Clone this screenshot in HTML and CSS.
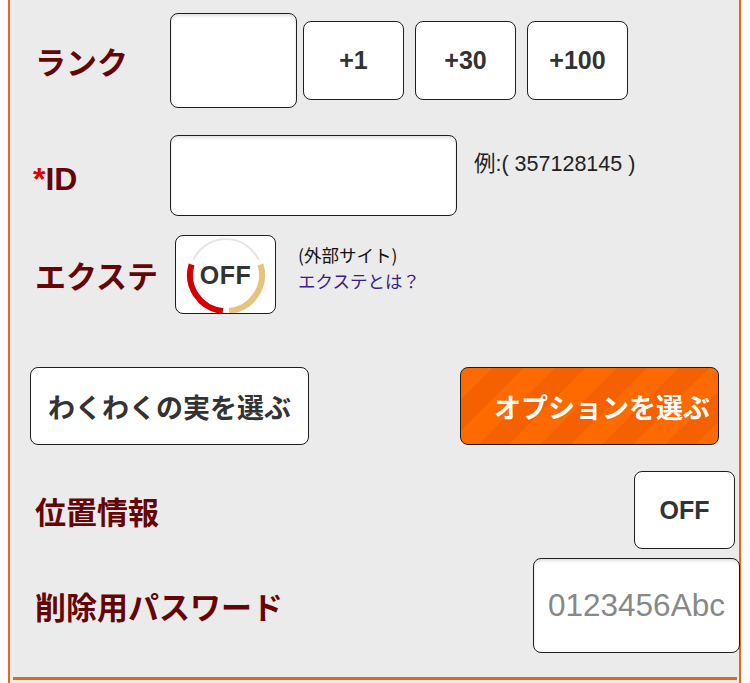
FILE: index.html
```html
<!DOCTYPE html>
<html lang="ja">
<head>
<meta charset="utf-8">
<title>フォーム</title>
<link rel="stylesheet" href="styles.css">
</head>
<body>
<div class="panel">
  <div class="row row-rank">
    <div class="label">ランク</div>
    <div class="field field-rank"></div>
    <div class="btn-group">
      <button class="btn btn-num">+1</button>
      <button class="btn btn-num">+30</button>
      <button class="btn btn-num">+100</button>
    </div>
  </div>

  <div class="row row-id">
    <div class="label label-id"><span class="req">*</span>ID</div>
    <div class="field field-id"></div>
    <div class="note">例:( 357128145 )</div>
  </div>

  <div class="row row-ext">
    <div class="label label-ext">エクステ</div>
    <div class="ring-box">
      <svg class="ring" viewBox="0 0 101 79" width="101" height="79" aria-hidden="true">
        <path d="M18.4 24.8 A36 36 0 0 1 83.6 24.8" fill="none" stroke="#e6e6e6" stroke-width="2"/>
        <path d="M16.6 29.5 A36 36 0 0 0 47.9 75.9" fill="none" stroke="#d40000" stroke-width="6"/>
        <path d="M54.1 75.9 A36 36 0 0 0 85.4 29.5" fill="none" stroke="#e8c37d" stroke-width="6"/>
      </svg>
      <span class="ring-text">OFF</span>
    </div>
    <div class="ext-info">
      <div class="ext-note">(外部サイト)</div>
      <a class="ext-link" href="#">エクステとは？</a>
    </div>
  </div>

  <div class="row row-choose">
    <button class="btn btn-wide btn-white">わくわくの実を選ぶ</button>
    <button class="btn btn-wide btn-orange">オプションを選ぶ</button>
  </div>

  <div class="row row-loc">
    <div class="label">位置情報</div>
    <button class="btn btn-num btn-off">OFF</button>
  </div>

  <div class="row row-pass">
    <div class="label">削除用パスワード</div>
    <div class="field field-pass"><span class="placeholder">0123456Abc</span></div>
  </div>

  <div class="divider"></div>
</div>
</body>
</html>
```

FILE: styles.css
```css
html, body {
  margin: 0;
  padding: 0;
  background: #fbfbfb;
}

body {
  font-family: "Liberation Sans", "Noto Sans CJK JP", sans-serif;
  overflow: hidden;
}

.panel {
  margin-left: 8px;
  width: 729px;
  min-height: 683px;
  padding-top: 13px;
  background: #ebebeb;
  border-left: 2px solid #e2661f;
  border-right: 2px solid #e2661f;
  box-sizing: content-box;
}

.row {
  display: flex;
  align-items: center;
}

.label {
  font-family: "Noto Sans CJK JP", sans-serif;
  font-weight: 700;
  font-size: 31px;
  color: #650606;
  white-space: nowrap;
  flex-shrink: 0;
}

.field {
  background: #fff;
  border: 1.5px solid #1e1e1e;
  border-radius: 8px;
  box-sizing: border-box;
  box-shadow: inset 0 2px 3px rgba(0, 0, 0, 0.12);
}

.btn {
  font: inherit;
  margin: 0;
  padding: 0;
  background: #fff;
  border: 1.5px solid #1e1e1e;
  border-radius: 8px;
  box-sizing: border-box;
  color: #333;
  cursor: pointer;
}

/* rank */
.row-rank {
  height: 95px;
  padding-left: 25px;
}
.row-rank .label {
  width: 135px;
}
.field-rank {
  width: 127px;
  height: 95px;
}
.btn-group {
  display: flex;
  gap: 11px;
  margin-left: 6px;
}
.btn-num {
  width: 101px;
  height: 79px;
  font-family: "Liberation Sans", sans-serif;
  font-weight: 700;
  font-size: 25px;
  color: #333;
}

/* id */
.row-id {
  height: 81px;
  margin-top: 27px;
  padding-left: 23px;
  align-items: flex-start;
}
.label-id {
  width: 137px;
  font-family: "Liberation Sans", sans-serif;
  font-size: 32px;
  margin-top: 26px;
}
.req {
  color: #e00000;
}
.field-id {
  width: 287px;
  height: 81px;
}
.note {
  margin-left: 17px;
  margin-top: 11px;
  font-size: 21.5px;
  color: #222;
  white-space: nowrap;
}

/* extension */
.row-ext {
  height: 79px;
  margin-top: 19px;
  padding-left: 25px;
}
.label-ext {
  width: 140px;
}
.ring-box {
  position: relative;
  width: 101px;
  height: 79px;
  background: #fff;
  border: 1.5px solid #1e1e1e;
  border-radius: 8px;
  box-sizing: border-box;
  display: flex;
  align-items: center;
  justify-content: center;
  overflow: hidden;
}
.ring {
  position: absolute;
  left: -1.5px;
  top: -1.5px;
}
.ring-text {
  position: relative;
  font-weight: 700;
  font-size: 25px;
  color: #333;
  letter-spacing: 0.5px;
  margin-top: 2px;
}
.ext-info {
  align-self: flex-start;
  margin-left: 22px;
  margin-top: 7px;
  font-family: "Noto Sans CJK JP", sans-serif;
  font-size: 17.5px;
  line-height: 25.5px;
}
.ext-note {
  color: #111;
}
.ext-link {
  display: block;
  color: #3b1d86;
  text-decoration: none;
}

/* choose buttons */
.row-choose {
  height: 78px;
  margin-top: 53px;
  padding: 0 20px;
  justify-content: space-between;
}
.btn-wide {
  height: 78px;
  font-family: "Noto Sans CJK JP", sans-serif;
  font-weight: 700;
  font-size: 27px;
}
.btn-white {
  width: 279px;
  color: #333;
}
.btn-orange {
  width: 259px;
  color: #fff;
  text-align: right;
  padding-right: 8px;
  white-space: nowrap;
  background: repeating-linear-gradient(135deg, #ff6a00 0 22px, #f56100 22px 44px);
}

/* location */
.row-loc {
  height: 78px;
  margin-top: 26px;
  padding: 0 4px 0 25px;
  justify-content: space-between;
}
.btn-off {
  height: 78px;
}

/* password */
.row-pass {
  height: 95px;
  margin-top: 9px;
  padding-left: 25px;
  justify-content: space-between;
  margin-right: -1px;
}
.field-pass {
  width: 207px;
  height: 95px;
  display: flex;
  align-items: center;
  padding-left: 14px;
}
.placeholder {
  font-family: "Liberation Sans", sans-serif;
  font-size: 31.5px;
  color: #888;
}

.divider {
  margin-top: 24px;
  margin-left: 3px;
  width: 724px;
  height: 3px;
  background: #e2661f;
}
```
